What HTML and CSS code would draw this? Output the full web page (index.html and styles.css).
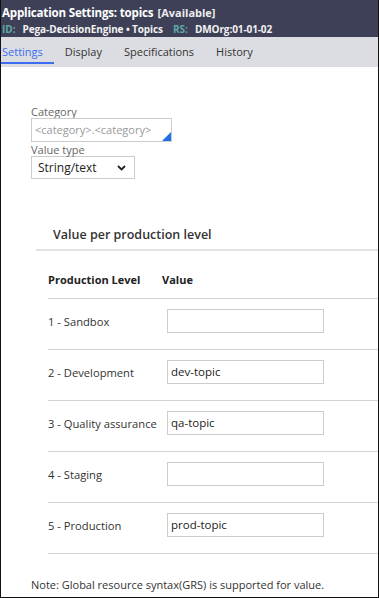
FILE: index.html
```html
<!DOCTYPE html>
<html>
<head>
<meta charset="utf-8">
<link rel="stylesheet" href="styles.css">
</head>
<body>
<div class="frame">
  <header class="hdr">
    <div class="title"><span class="t-main">Application Settings: topics</span> <span class="t-status">[Available]</span></div>
    <div class="meta"><span class="key">ID:</span><span class="val">Pega-DecisionEngine • Topics</span><span class="key key2">RS:</span><span class="val">DMOrg:01-01-02</span></div>
  </header>
  <nav class="tabs">
    <div class="tab active">Settings</div>
    <div class="tab">Display</div>
    <div class="tab">Specifications</div>
    <div class="tab">History</div>
  </nav>
  <main class="content">
    <div class="field">
      <div class="lbl">Category</div>
      <div class="txt cat"><span class="ph">&lt;category&gt;.&lt;category&gt;</span><span class="corner"></span></div>
    </div>
    <div class="field">
      <div class="lbl">Value type</div>
      <div class="sel"><span>String/text</span><svg width="9" height="6" viewBox="0 0 9 6"><path d="M1 1 L4.5 4.5 L8 1" fill="none" stroke="#222" stroke-width="1.8"/></svg></div>
    </div>
    <section class="section">
      <h2 class="sec-title">Value per production level</h2>
      <div class="table">
        <div class="row head"><div>Production Level</div><div>Value</div></div>
        <div class="row"><div class="lv">1 - Sandbox</div><div class="inp"></div></div>
        <div class="row"><div class="lv">2 - Development</div><div class="inp">dev-topic</div></div>
        <div class="row"><div class="lv">3 - Quality assurance</div><div class="inp">qa-topic</div></div>
        <div class="row"><div class="lv">4 - Staging</div><div class="inp"></div></div>
        <div class="row"><div class="lv">5 - Production</div><div class="inp">prod-topic</div></div>
      </div>
    </section>
    <p class="note">Note: Global resource syntax(GRS) is supported for value.</p>
  </main>
</div>
</body>
</html>
```

FILE: styles.css
```css
* { box-sizing: border-box; }
html, body { margin: 0; padding: 0; }
body {
  width: 379px;
  height: 598px;
  overflow: hidden;
  font-family: "Open Sans", "Liberation Sans", sans-serif;
  color: #333;
  background: #fff;
}
.frame {
  width: 379px;
  height: 598px;
  border: 1px solid #111;
  border-top: 0;
  display: flex;
  flex-direction: column;
}
.hdr {
  background: #3e4057;
  height: 37px;
  padding: 3px 0 0 1px;
}
.title { line-height: 17px; white-space: nowrap; }
.t-main { font-size: 11.6px; font-weight: 700; color: #fff; letter-spacing: -0.2px; }
.t-status { font-size: 11px; font-weight: 700; color: #ececec; }
.meta {
  font-size: 10px;
  font-weight: 700;
  line-height: 15px;
  margin-top: 1px;
  white-space: nowrap;
  color: #f2f2f2;
}
.val { letter-spacing: -0.1px; }
.key { color: #5fa8a8; margin-right: 7px; }
.key2 { margin-left: 10px; }
.tabs {
  background: #dcdde2;
  height: 30px;
  display: flex;
  align-items: stretch;
}
.tab {
  font-size: 11px;
  color: #333;
  padding: 6px 11px 0;
  line-height: 18px;
  border-bottom: 2px solid transparent;
}
.tab:first-child { padding-left: 1px; }
.tab.active { color: #3c6cf2; border-bottom-color: #3c6cf2; height: 27px; }
.content {
  flex: 1;
  padding: 39px 0 0 30px;
}
.field { margin-bottom: 2px; }
.lbl { font-size: 11px; color: #666; line-height: 12px; height: 12px; }
.txt {
  position: relative;
  width: 141px;
  height: 24px;
  border: 1px solid #ccc;
  padding: 3px 0 0 3px;
  font-size: 11px;
}
.ph { color: #9a9a9a; }
.corner {
  position: absolute;
  right: 0;
  bottom: 0;
  width: 0;
  height: 0;
  border-left: 9px solid transparent;
  border-bottom: 9px solid #1f6fe8;
}
.sel {
  width: 104px;
  height: 23px;
  border: 1px solid #ccc;
  font-size: 12px;
  color: #222;
  display: flex;
  align-items: center;
  justify-content: space-between;
  padding: 0 8px 0 6px;
  margin-top: 0;
}
.section { margin: 42px 0 0 5px; }
.sec-title {
  margin: 0;
  font-size: 12.5px;
  font-weight: 600;
  color: #333;
  padding: 4px 0 0 17px;
  height: 30px;
  line-height: 20px;
  border-bottom: 2px solid #e2e2e2;
}
.table { margin-left: 12px; }
.row {
  display: grid;
  grid-template-columns: 119px 157px;
  align-items: center;
  height: 51px;
  padding: 10px 0 16px;
  border-bottom: 1px solid #d4d4d4;
  font-size: 11.2px;
}
.row.head {
  grid-template-columns: 114px 100px;
  height: 48px;
  padding: 21px 0 0;
  font-weight: 700;
  font-size: 11px;
  color: #222;
  align-items: start;
}
.inp {
  height: 24px;
  border: 1px solid #ccc;
  padding: 0 0 0 3px;
  line-height: 21px;
  font-size: 11.5px;
  color: #222;
}
.note {
  margin: 23px 0 0 0;
  font-size: 11px;
  color: #333;
}
```
